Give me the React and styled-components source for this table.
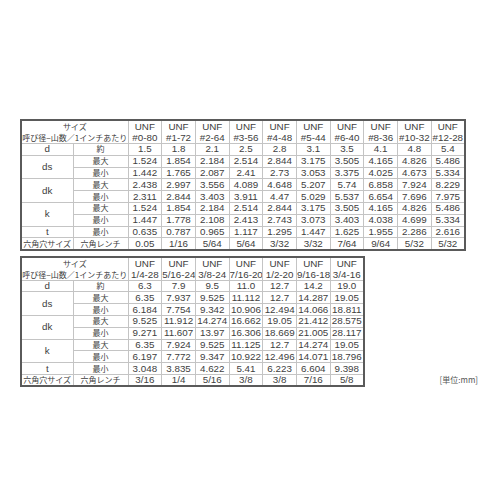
import React from 'react'
import styled, { createGlobalStyle } from 'styled-components'

const Global = createGlobalStyle`
  body {
    margin: 0;
    background: #fff;
  }
`

const Page = styled.div`
  width: 458px;
  padding: 119px 0 0 20px;
  display: flex;
  flex-direction: column;
  gap: 5px;
  font-family: "Liberation Sans", "Noto Sans CJK JP", sans-serif;
  color: #404040;
`

const BottomRow = styled.div`
  display: flex;
  align-items: flex-end;
  justify-content: space-between;
`

const Table = styled.table`
  border-collapse: collapse;
  table-layout: fixed;
  width: ${p => p.$width}px;
  border: 2px solid #5a5a5a;
`

const Tr = styled.tr`
  height: ${p => (p.$head ? 22 : 11.8)}px;
`

const Cell = styled.td`
  border: 1px solid #c4c4c4;
  padding: 0;
  text-align: center;
  vertical-align: middle;
  font-size: ${p => (p.$jp ? 8 : 9.8)}px;
  line-height: ${p => (p.$headCell ? 11 : 10)}px;
  white-space: nowrap;
  overflow: hidden;
  font-family: ${p => (p.$jp ? '"Noto Sans CJK JP", sans-serif' : '"Liberation Sans", sans-serif')};
`

const Unit = styled.div`
  font-family: "Noto Sans CJK JP", sans-serif;
  font-size: 8px;
  color: #555;
  padding-bottom: 2px;
`

const table1 = {
  sizes: ['#0-80', '#1-72', '#2-64', '#3-56', '#4-48', '#5-44', '#6-40', '#8-36', '#10-32', '#12-28'],
  d: ['1.5', '1.8', '2.1', '2.5', '2.8', '3.1', '3.5', '4.1', '4.8', '5.4'],
  dsMax: ['1.524', '1.854', '2.184', '2.514', '2.844', '3.175', '3.505', '4.165', '4.826', '5.486'],
  dsMin: ['1.442', '1.765', '2.087', '2.41', '2.73', '3.053', '3.375', '4.025', '4.673', '5.334'],
  dkMax: ['2.438', '2.997', '3.556', '4.089', '4.648', '5.207', '5.74', '6.858', '7.924', '8.229'],
  dkMin: ['2.311', '2.844', '3.403', '3.911', '4.47', '5.029', '5.537', '6.654', '7.696', '7.975'],
  kMax: ['1.524', '1.854', '2.184', '2.514', '2.844', '3.175', '3.505', '4.165', '4.826', '5.486'],
  kMin: ['1.447', '1.778', '2.108', '2.413', '2.743', '3.073', '3.403', '4.038', '4.699', '5.334'],
  t: ['0.635', '0.787', '0.965', '1.117', '1.295', '1.447', '1.625', '1.955', '2.286', '2.616'],
  hex: ['0.05', '1/16', '5/64', '5/64', '3/32', '3/32', '7/64', '9/64', '5/32', '5/32'],
}

const table2 = {
  sizes: ['1/4-28', '5/16-24', '3/8-24', '7/16-20', '1/2-20', '9/16-18', '3/4-16'],
  d: ['6.3', '7.9', '9.5', '11.0', '12.7', '14.2', '19.0'],
  dsMax: ['6.35', '7.937', '9.525', '11.112', '12.7', '14.287', '19.05'],
  dsMin: ['6.184', '7.754', '9.342', '10.906', '12.494', '14.066', '18.811'],
  dkMax: ['9.525', '11.912', '14.274', '16.662', '19.05', '21.412', '28.575'],
  dkMin: ['9.271', '11.607', '13.97', '16.306', '18.669', '21.005', '28.117'],
  kMax: ['6.35', '7.924', '9.525', '11.125', '12.7', '14.274', '19.05'],
  kMin: ['6.197', '7.772', '9.347', '10.922', '12.496', '14.071', '18.796'],
  t: ['3.048', '3.835', '4.622', '5.41', '6.223', '6.604', '9.398'],
  hex: ['3/16', '1/4', '5/16', '3/8', '3/8', '7/16', '5/8'],
}

const rows = [
  { key: 'd', label: 'd', sub: '約', span: 1 },
  { key: 'dsMax', label: 'ds', sub: '最大', span: 2 },
  { key: 'dsMin', sub: '最小' },
  { key: 'dkMax', label: 'dk', sub: '最大', span: 2 },
  { key: 'dkMin', sub: '最小' },
  { key: 'kMax', label: 'k', sub: '最大', span: 2 },
  { key: 'kMin', sub: '最小' },
  { key: 't', label: 't', sub: '最小', span: 1 },
  { key: 'hex', label: '六角穴サイズ', sub: '六角レンチ', span: 1, jp: true },
]

const COL = 33.7

function SpecTable({ data }) {
  const n = data.sizes.length
  return (
    <Table $width={Math.round(107 + n * COL)}>
      <colgroup>
        <col style={{ width: 52 }} />
        <col style={{ width: 55 }} />
        {data.sizes.map(s => <col key={s} style={{ width: COL }} />)}
      </colgroup>
      <tbody>
        <Tr $head>
          <Cell colSpan={2} $jp $headCell>サイズ<br />呼び径−山数／1インチあたり</Cell>
          {data.sizes.map(s => (
            <Cell key={s} $headCell>UNF<br />{s}</Cell>
          ))}
        </Tr>
        {rows.map(r => (
          <Tr key={r.key}>
            {r.label && (
              <Cell rowSpan={r.span} $jp={r.jp}>{r.label}</Cell>
            )}
            <Cell $jp>{r.sub}</Cell>
            {data[r.key].map((v, i) => <Cell key={i}>{v}</Cell>)}
          </Tr>
        ))}
      </tbody>
    </Table>
  )
}

export default function App() {
  return (
    <Page>
      <Global />
      <SpecTable data={table1} />
      <BottomRow>
        <SpecTable data={table2} />
        <Unit>[単位:mm]</Unit>
      </BottomRow>
    </Page>
  )
}
